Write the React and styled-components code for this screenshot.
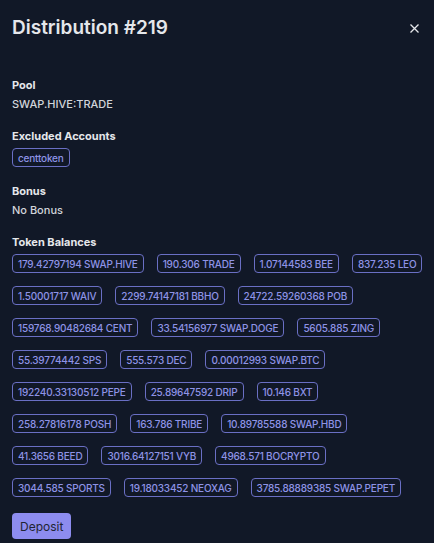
import React from "react";
import styled, { createGlobalStyle } from "styled-components";

const GlobalStyle = createGlobalStyle`
  html, body {
    margin: 0;
    padding: 0;
    background: #111827;
  }
  body {
    font-family: Inter, "Noto Sans", sans-serif;
    color: #e5e7eb;
  }
`;

const Panel = styled.div`
  width: 434px;
  min-height: 543px;
  box-sizing: border-box;
  padding: 14px 12px 12px;
  background: #111827;
`;

const Header = styled.div`
  display: flex;
  align-items: center;
  justify-content: space-between;
  margin-bottom: 35px;
`;

const Title = styled.h2`
  margin: 0;
  font-size: 19px;
  line-height: 28px;
  font-weight: 600;
  color: #e5e7eb;
`;

const CloseButton = styled.button`
  border: 0;
  background: none;
  padding: 0;
  width: 12px;
  height: 12px;
  margin-right: 2px;
  display: flex;
  align-items: center;
  justify-content: center;
  color: #e5e7eb;
  cursor: pointer;
`;

const Section = styled.div`
  margin-bottom: 16px;
`;

const Label = styled.div`
  font-size: 11px;
  line-height: 16px;
  font-weight: 700;
  color: #e5e7eb;
  margin-bottom: 3px;
`;

const Value = styled.div`
  font-size: 11px;
  line-height: 16px;
  font-weight: 500;
  color: #d1d5db;
`;

const BadgeList = styled.div`
  display: flex;
  flex-wrap: wrap;
  gap: 13px 13px;
  padding-top: 1px;
  margin-right: -4px;
`;

const Badge = styled.span`
  display: inline-flex;
  align-items: center;
  height: 19px;
  box-sizing: border-box;
  padding: 0 5px;
  border: 1px solid #6a6fc4;
  border-radius: 4px;
  font-size: 10px;
  font-weight: 500;
  letter-spacing: -0.2px;
  color: #8e93e6;
  white-space: nowrap;
`;

const DepositButton = styled.button`
  height: 26px;
  padding: 0 8px;
  border: 0;
  border-radius: 4px;
  background: #8d8cef;
  color: #1f2433;
  font-family: Inter, sans-serif;
  font-size: 12px;
  font-weight: 400;
  cursor: pointer;
`;

const balances = [
  "179.42797194 SWAP.HIVE",
  "190.306 TRADE",
  "1.07144583 BEE",
  "837.235 LEO",
  "1.50001717 WAIV",
  "2299.74147181 BBHO",
  "24722.59260368 POB",
  "159768.90482684 CENT",
  "33.54156977 SWAP.DOGE",
  "5605.885 ZING",
  "55.39774442 SPS",
  "555.573 DEC",
  "0.00012993 SWAP.BTC",
  "192240.33130512 PEPE",
  "25.89647592 DRIP",
  "10.146 BXT",
  "258.27816178 POSH",
  "163.786 TRIBE",
  "10.89785588 SWAP.HBD",
  "41.3656 BEED",
  "3016.64127151 VYB",
  "4968.571 BOCRYPTO",
  "3044.585 SPORTS",
  "19.18033452 NEOXAG",
  "3785.88889385 SWAP.PEPET",
];

export default function App() {
  return (
    <>
      <GlobalStyle />
      <Panel>
        <Header>
          <Title>Distribution #219</Title>
          <CloseButton aria-label="Close">
            <svg width="9" height="9" viewBox="0 0 9 9" fill="none">
              <path d="M0.5 0.5L8.5 8.5M8.5 0.5L0.5 8.5" stroke="currentColor" strokeWidth="1.3" />
            </svg>
          </CloseButton>
        </Header>

        <Section>
          <Label>Pool</Label>
          <Value>SWAP.HIVE:TRADE</Value>
        </Section>

        <Section>
          <Label>Excluded Accounts</Label>
          <BadgeList>
            <Badge>centtoken</Badge>
          </BadgeList>
        </Section>

        <Section>
          <Label>Bonus</Label>
          <Value>No Bonus</Value>
        </Section>

        <Section>
          <Label>Token Balances</Label>
          <BadgeList>
            {balances.map((b) => (
              <Badge key={b}>{b}</Badge>
            ))}
          </BadgeList>
        </Section>

        <DepositButton>Deposit</DepositButton>
      </Panel>
    </>
  );
}
